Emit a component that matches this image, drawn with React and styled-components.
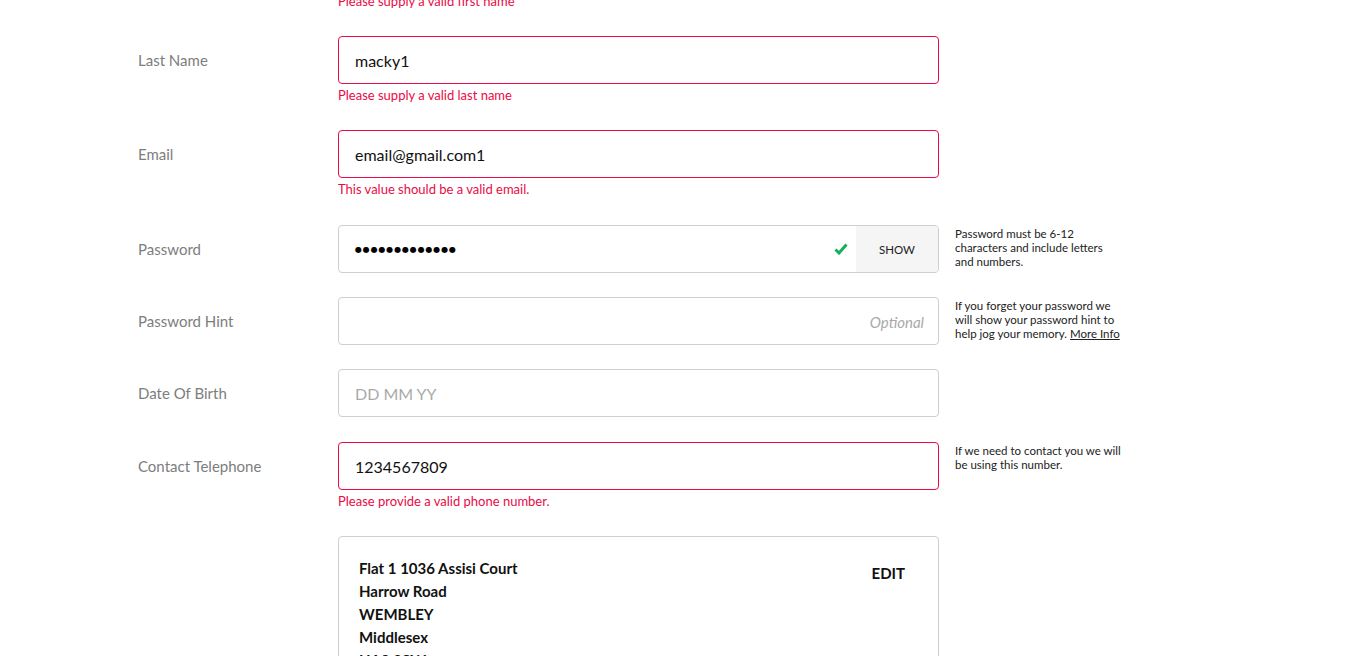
import styled, { createGlobalStyle } from 'styled-components';

const GlobalStyle = createGlobalStyle`
  html, body {
    margin: 0;
    padding: 0;
    background: #fff;
    overflow: hidden;
  }
  body {
    font-family: Lato, "Open Sans", sans-serif;
    color: #000;
  }
`;

const Page = styled.div`
  width: 1349px;
  height: 656px;
  overflow: hidden;
`;

const Form = styled.form`
  margin-top: -58px;
  padding-left: 138px;
  display: flex;
  flex-direction: column;
  gap: 24px;
`;

const Row = styled.div`
  display: grid;
  grid-template-columns: 184px 601px 170px;
  column-gap: 16px;
  align-items: start;
  margin-top: ${(p) => p.$nudge || 0}px;
`;

const Label = styled.label`
  height: 48px;
  display: flex;
  align-items: center;
  font-size: 15px;
  color: #7d7d7d;
`;

const Field = styled.div`
  display: flex;
  flex-direction: column;
`;

const Box = styled.div`
  position: relative;
  height: 48px;
  box-sizing: border-box;
  display: flex;
  align-items: center;
  border: 1px solid ${(p) => (p.$error ? '#ea0a45' : '#cfcfcf')};
  border-radius: 4px;
  overflow: hidden;
  background: #fff;
`;

const Input = styled.input`
  flex: 1;
  height: 100%;
  border: 0;
  outline: none;
  padding: 0 14px 0 16px;
  font-family: Lato, "Open Sans", sans-serif;
  font-size: 16px;
  color: #111;
  background: transparent;
  text-align: ${(p) => (p.$right ? 'right' : 'left')};

  &::placeholder {
    color: #a9a9a9;
    font-size: ${(p) => (p.$italic ? 15 : 16)}px;
    font-style: ${(p) => (p.$italic ? 'italic' : 'normal')};
  }
`;

const Dots = styled.div`
  flex: 1;
  padding-left: 16px;
  font-family: "DejaVu Sans", sans-serif;
  font-size: 8px;
  letter-spacing: 0.85px;
  color: #000;
`;

const Check = styled.svg`
  width: 14px;
  height: 12px;
  margin-right: 8px;
`;

const ShowButton = styled.button`
  width: 82px;
  height: 100%;
  border: 0;
  background: #f5f5f5;
  font-family: Lato, "Open Sans", sans-serif;
  font-size: 11.5px;
  color: #222;
  cursor: pointer;
`;

const Error = styled.div`
  margin: 3px 0 3px;
  font-size: 13px;
  line-height: 16px;
  color: #ea0a45;
`;

const Help = styled.p`
  margin: 0;
  padding-top: 2px;
  width: 168px;
  font-size: 11.5px;
  line-height: 14px;
  color: #222;

  a {
    color: #222;
    text-decoration: underline;
  }
`;

const AddressCard = styled.div`
  box-sizing: border-box;
  height: 160px;
  border: 1px solid #cfcfcf;
  border-radius: 4px;
  padding: 20px 33px 0 20px;
  display: flex;
  justify-content: space-between;
  align-items: flex-start;
`;

const AddressLines = styled.div`
  font-size: 15px;
  line-height: 23px;
  font-weight: 700;
  color: #111;
`;

const EditLink = styled.a`
  margin-top: 7px;
  font-size: 15px;
  font-weight: 700;
  color: #111;
  text-decoration: none;
`;

const TextRow = ({ label, value, error, help, placeholder, nudge }) => (
  <Row $nudge={nudge}>
    <Label>{label}</Label>
    <Field>
      <Box $error={!!error}>
        <Input readOnly value={value} placeholder={placeholder} />
      </Box>
      {error && <Error>{error}</Error>}
    </Field>
    {help ? <Help>{help}</Help> : <span />}
  </Row>
);

const App = () => {
  return (
    <Page>
      <GlobalStyle />
      <Form>
        <TextRow label="First Name" value="macky1" error="Please supply a valid first name" />
        <TextRow label="Last Name" value="macky1" error="Please supply a valid last name" />
        <TextRow label="Email" value="email@gmail.com1" error="This value should be a valid email." />

        <Row $nudge={1}>
          <Label>Password</Label>
          <Field>
            <Box>
              <Dots>●●●●●●●●●●●●●</Dots>
              <Check viewBox="0 0 14 12">
                <path d="M1.5 6.5 L5 10 L12.5 1.5" fill="none" stroke="#13b05a" strokeWidth="3" />
              </Check>
              <ShowButton type="button">SHOW</ShowButton>
            </Box>
          </Field>
          <Help>Password must be 6-12 characters and include letters and numbers.</Help>
        </Row>

        <Row>
          <Label>Password Hint</Label>
          <Field>
            <Box>
              <Input readOnly value="" placeholder="Optional" $italic $right />
            </Box>
          </Field>
          <Help>
            If you forget your password we will show your password hint to help jog your memory.{' '}
            <a href="#">More Info</a>
          </Help>
        </Row>

        <TextRow label="Date Of Birth" value="" placeholder="DD MM YY" />
        <TextRow
          label="Contact Telephone"
          value="1234567809"
          error="Please provide a valid phone number."
          help="If we need to contact you we will be using this number."
          nudge={1}
        />

        <Row>
          <span />
          <AddressCard>
            <AddressLines>
              Flat 1 1036 Assisi Court
              <br />
              Harrow Road
              <br />
              WEMBLEY
              <br />
              Middlesex
              <br />
              HA9 0SW
            </AddressLines>
            <EditLink href="#">EDIT</EditLink>
          </AddressCard>
          <span />
        </Row>
      </Form>
    </Page>
  );
};

export default App;
